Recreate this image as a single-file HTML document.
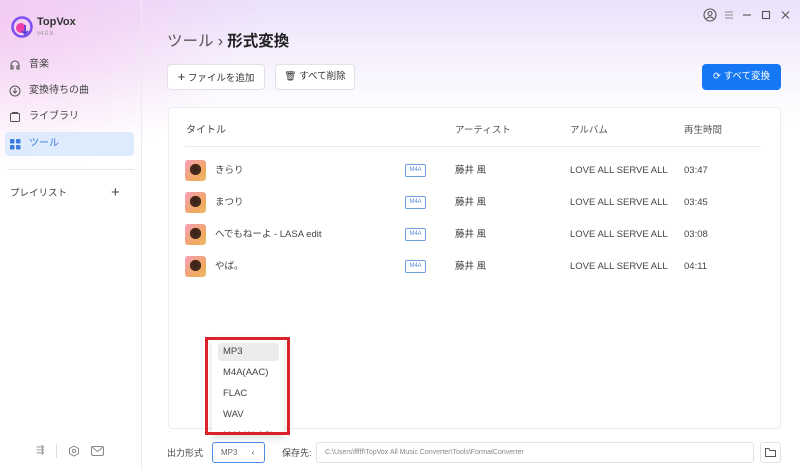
<!DOCTYPE html>
<html><head><meta charset="utf-8"><style>
*{margin:0;padding:0;box-sizing:border-box}
body{width:800px;height:470px;overflow:hidden;font-family:"Liberation Sans","Noto Sans CJK JP",sans-serif;color:#333;position:relative;background:linear-gradient(180deg,#ebe0fb 0px,#f5effd 50px,#fcfbff 100px,#fff 130px)}
.bg{position:absolute;left:0;top:0;width:800px;height:470px;background:radial-gradient(ellipse 260px 150px at 0 20px,rgba(245,195,238,.75),rgba(255,255,255,0) 100%)}
.a{position:absolute}
.side{left:0;top:0;width:142px;height:470px;border-right:1px solid #ebebef}
.nav{left:5px;width:129px;height:24px;font-size:10px;color:#444;padding-left:24px;line-height:24px;border-radius:4px}
.btn{background:#fff;border:1px solid #e2e2e6;border-radius:4px;font-size:9.5px;line-height:24px;text-align:center;height:26px}
.row{left:185px;width:560px;height:22px;font-size:9.5px;color:#444}
.row span{position:absolute;top:0;line-height:21px}
.av{position:absolute;left:0;top:0;width:21px;height:21px;border-radius:3px;background:radial-gradient(circle at 50% 45%,#3a2418 0,#4a2a1a 35%,transparent 37%),linear-gradient(135deg,#f5a0b8,#f0a860 70%,#e8c070)}
.tag{position:absolute;left:220px;top:4px;width:21px;height:13px;border:1px solid #6a9fe0;border-radius:2px;font-size:6px;color:#5a8fd8;text-align:center;line-height:11px}
</style></head><body>
<div class="bg"></div>
<div class="a side"></div>
<svg class="a" style="left:10px;top:15px" width="24" height="24" viewBox="0 0 24 24"><circle cx="12" cy="12" r="9.5" fill="none" stroke="#7b4ff0" stroke-width="2.5"/><circle cx="11" cy="13" r="5" fill="#ec3fa8"/><path d="M15 10v9m-3-3 3 3 3-3" stroke="#5b3fd8" stroke-width="1.8" fill="none"/></svg>
<div class="a" style="left:37px;top:16px;font-size:11px;font-weight:bold;color:#333">TopVox</div>
<div class="a" style="left:37px;top:31px;font-size:6px;color:#999">v4.0.8</div>
<div class="a nav" style="top:53px">音楽</div>
<svg class="a" style="left:9px;top:59px" width="12" height="12" viewBox="0 0 12 12" fill="none" stroke="#555" stroke-width="1.1"><path d="M2 9V6a4 4 0 0 1 8 0v3M2 7h2v3H2zM8 7h2v3H8z"/></svg>
<div class="a nav" style="top:79px">変換待ちの曲</div>
<svg class="a" style="left:9px;top:85px" width="12" height="12" viewBox="0 0 12 12" fill="none" stroke="#555" stroke-width="1"><circle cx="6" cy="6" r="5"/><path d="M6 3v5M4 6l2 2 2-2"/></svg>
<div class="a nav" style="top:105px">ライブラリ</div>
<svg class="a" style="left:9px;top:111px" width="12" height="12" viewBox="0 0 12 12" fill="none" stroke="#555" stroke-width="1"><rect x="1.5" y="2.5" width="9" height="8" rx="1"/><path d="M3 1.5h6"/></svg>
<div class="a nav" style="top:132px;background:#deebfc;color:#3a7be0">ツール</div>
<svg class="a" style="left:10px;top:139px" width="11" height="11" viewBox="0 0 11 11" fill="#3a7be0"><rect width="4.5" height="4.5" rx="1"/><rect x="6" width="4.5" height="4.5" rx="1"/><rect y="6" width="4.5" height="4.5" rx="1"/><rect x="6" y="6" width="4.5" height="4.5" rx="1"/></svg>
<div class="a" style="left:9px;top:169px;width:125px;height:1px;background:#e6e6ea"></div>
<div class="a" style="left:10px;top:186px;font-size:9.5px;color:#444;line-height:16px">プレイリスト</div>
<div class="a" style="left:111px;top:184px;font-size:15px;color:#444;line-height:18px">+</div>
<div class="a" style="left:36px;top:445px;font-size:10px;color:#888">⇶</div>
<div class="a" style="left:56px;top:444px;width:1px;height:14px;background:#ddd"></div>
<svg class="a" style="left:68px;top:445px" width="12" height="12" viewBox="0 0 12 12" fill="none" stroke="#888"><path d="M6 1l4.5 2.5v5L6 11 1.5 8.5v-5z"/><circle cx="6" cy="6" r="1.6"/></svg>
<svg class="a" style="left:91px;top:446px" width="13" height="10" viewBox="0 0 13 10" fill="none" stroke="#888"><rect x=".5" y=".5" width="12" height="9" rx="1.5"/><path d="M1 1l5.5 4.5L12 1"/></svg>
<svg class="a" style="left:703px;top:8px" width="92" height="14" viewBox="0 0 92 14" fill="none" stroke="#555" stroke-width="1.1"><circle cx="7" cy="7" r="6"/><circle cx="7" cy="5.5" r="2"/><path d="M3.5 11a4 4 0 0 1 7 0"/><path d="M22 4h8M22 7h8M22 10h8" stroke="#888"/><path d="M40 7h8"/><rect x="59.5" y="3.5" width="7" height="7"/><path d="M79 3.5l7 7M86 3.5l-7 7"/></svg>
<div class="a" style="left:167px;top:31px;font-size:15.5px;color:#555;line-height:22px">ツール <span style="color:#444">›</span> <b style="color:#222">形式変換</b></div>
<div class="a btn" style="left:167px;top:64px;width:98px"><span style="font-size:13px">+</span> ファイルを追加</div>
<div class="a btn" style="left:275px;top:64px;width:80px">🗑 すべて削除</div>
<div class="a" style="left:702px;top:64px;width:79px;height:26px;background:#1677f5;border-radius:4px;color:#fff;font-size:9.5px;line-height:26px;text-align:center">⟳ すべて変換</div>
<div class="a" style="left:168px;top:107px;width:613px;height:322px;background:#fff;border:1px solid #ececf0;border-radius:4px"></div>
<div class="a" style="left:186px;top:124px;font-size:10px;color:#444;line-height:14px">タイトル</div>
<div class="a" style="left:455px;top:124px;font-size:9.5px;color:#555;line-height:14px">アーティスト</div>
<div class="a" style="left:570px;top:124px;font-size:9.5px;color:#555;line-height:14px">アルバム</div>
<div class="a" style="left:684px;top:124px;font-size:9.5px;color:#555;line-height:14px">再生時間</div>
<div class="a" style="left:185px;top:146px;width:576px;height:1px;background:#ececf0"></div>
<div class="a row" style="top:160px"><div class="av"></div><span style="left:30px">きらり</span><div class="tag">M4A</div><span style="left:270px">藤井 風</span><span style="left:385px">LOVE ALL SERVE ALL</span><span style="left:499px">03:47</span></div>
<div class="a row" style="top:192px"><div class="av"></div><span style="left:30px">まつり</span><div class="tag">M4A</div><span style="left:270px">藤井 風</span><span style="left:385px">LOVE ALL SERVE ALL</span><span style="left:499px">03:45</span></div>
<div class="a row" style="top:224px"><div class="av"></div><span style="left:30px">へでもねーよ - LASA edit</span><div class="tag">M4A</div><span style="left:270px">藤井 風</span><span style="left:385px">LOVE ALL SERVE ALL</span><span style="left:499px">03:08</span></div>
<div class="a row" style="top:256px"><div class="av"></div><span style="left:30px">やば。</span><div class="tag">M4A</div><span style="left:270px">藤井 風</span><span style="left:385px">LOVE ALL SERVE ALL</span><span style="left:499px">04:11</span></div>
<div class="a" style="left:167px;top:446px;font-size:9px;color:#444;line-height:14px">出力形式</div>
<div class="a" style="left:212px;top:442px;width:53px;height:21px;border:1px solid #4a8ae8;border-radius:3px;font-size:8px;color:#666;line-height:19px;padding-left:8px">MP3 <span style="margin-left:12px;color:#444">‹</span></div>
<div class="a" style="left:282px;top:446px;font-size:9px;color:#444;line-height:14px">保存先:</div>
<div class="a" style="left:316px;top:442px;width:438px;height:21px;border:1px solid #e2e2e6;border-radius:3px;font-size:7px;color:#888;line-height:19px;padding-left:8px;background:#fff">C:\Users\fffff\TopVox All Music Converter\Tools\FormatConverter</div>
<div class="a" style="left:760px;top:442px;width:21px;height:21px;border:1px solid #e2e2e6;border-radius:3px"></div>
<svg class="a" style="left:765px;top:448px" width="11" height="9" viewBox="0 0 11 9" fill="none" stroke="#555"><path d="M.5 1.5v7h10v-6H5L4 .5H.5z"/></svg>
<div class="a" style="left:212px;top:339px;width:72px;height:96px;background:#fff;box-shadow:0 2px 8px rgba(0,0,0,.15);overflow:hidden;font-size:9.5px;color:#444">
<div class="a" style="left:6px;top:4px;width:61px;height:18px;background:#ececec;border-radius:3px"></div>
<div class="a" style="left:11px;top:7px;line-height:12px">MP3</div>
<div class="a" style="left:11px;top:28px;line-height:12px">M4A(AAC)</div>
<div class="a" style="left:11px;top:49px;line-height:12px">FLAC</div>
<div class="a" style="left:11px;top:70px;line-height:12px">WAV</div>
<div class="a" style="left:11px;top:91px;line-height:12px">M4A(ALAC)</div>
</div>
<div class="a" style="left:205px;top:337px;width:85px;height:98px;border:3px solid #d9232a"></div>
</body></html>
